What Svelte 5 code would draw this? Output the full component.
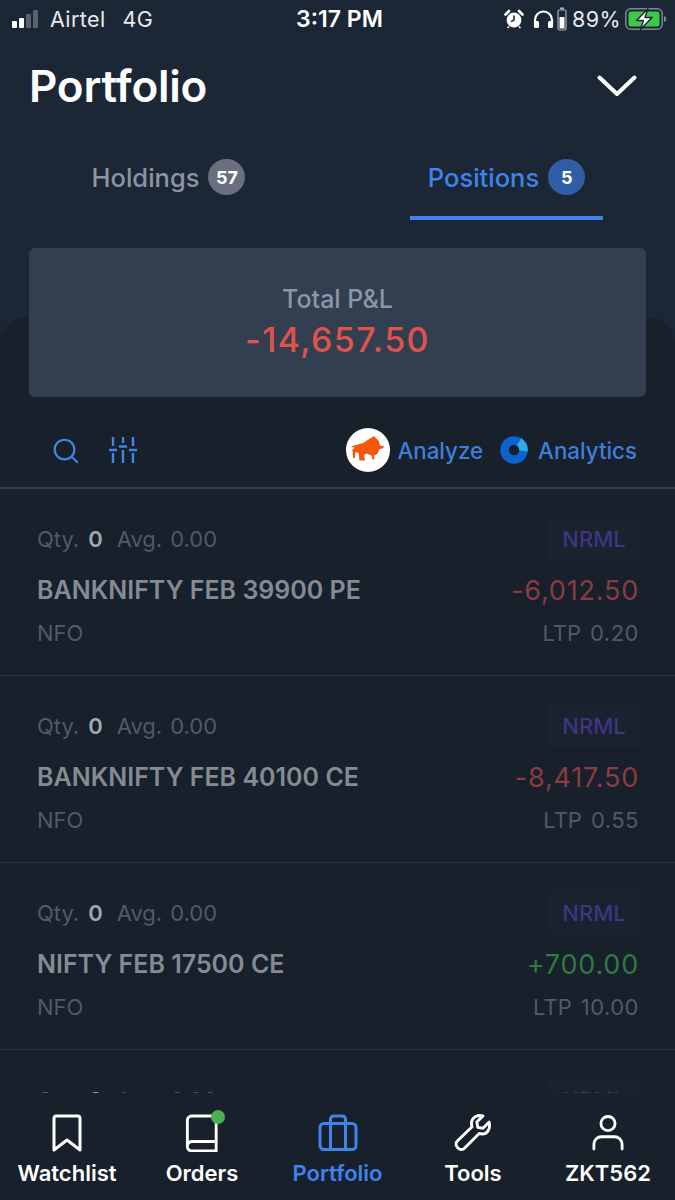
<script>
  const positions = [
    { name: 'BANKNIFTY FEB 39900 PE', pnl: '-6,012.50', ltp: '0.20', tone: 'loss' },
    { name: 'BANKNIFTY FEB 40100 CE', pnl: '-8,417.50', ltp: '0.55', tone: 'loss' },
    { name: 'NIFTY FEB 17500 CE', pnl: '+700.00', ltp: '10.00', tone: 'gain' },
    { clipped: true },
  ];
</script>

<div class="screen">
  <div class="status">
    <div class="status-left">
      <span class="signal"><i class="on s1"></i><i class="on s2"></i><i class="s3"></i><i class="s4"></i></span>
      <span>Airtel</span>
      <span class="net">4G</span>
    </div>
    <div class="clock">3:17 PM</div>
    <div class="status-right">
      <svg class="alarm" width="20" height="20" viewBox="0 0 20 20">
        <circle cx="10" cy="11" r="7.4" fill="#fff" />
        <path d="M10 6.500V11l-3 1.600" fill="none" stroke="#1b2735" stroke-width="1.600" />
        <path d="M1.500 5.500 5 2M18.500 5.500 15 2" stroke="#fff" stroke-width="2.600" stroke-linecap="round" />
        <path d="M5 17.500 3.600 19M15 17.500l1.400 1.500" stroke="#fff" stroke-width="1.600" />
      </svg>
      <svg class="phones" width="21" height="19" viewBox="0 0 21 19">
        <path d="M2 16V10a8.500 8.500 0 0 1 17 0v6" fill="none" stroke="#fff" stroke-width="2.200" />
        <rect x="1" y="11" width="5" height="7" rx="1.500" fill="#fff" />
        <rect x="15" y="11" width="5" height="7" rx="1.500" fill="#fff" />
      </svg>
      <svg class="mini-batt" width="10" height="24" viewBox="0 0 10 24">
        <rect x="3" y="0.500" width="4" height="2" fill="#aab0b7" />
        <rect x="1" y="3" width="8" height="20" rx="1.500" fill="none" stroke="#aab0b7" stroke-width="1.200" />
        <rect x="2.500" y="10" width="5" height="11.500" fill="#fff" />
      </svg>
      <span class="pct">89%</span>
      <svg width="42" height="22" viewBox="0 0 42 22">
        <rect x="0.800" y="0.800" width="36.400" height="20.400" rx="5" fill="none" stroke="#7f868d" stroke-width="1.500" />
        <rect x="3.500" y="3.500" width="31" height="15" rx="2.500" fill="#3cc94a" />
        <path d="M39 8v6c1.500-.4 2.200-1.500 2.200-3S40.500 8.400 39 8Z" fill="#7f868d" />
        <path d="M23 0.800 11.500 12.500h7L15.500 21.500 27 9.500h-7Z" fill="#fff" stroke="#1b2735" stroke-width="1.400" stroke-linejoin="round" />
      </svg>
    </div>
  </div>

  <header class="title-bar">
    <h1>Portfolio</h1>
    <svg width="40" height="24" viewBox="0 0 40 24">
      <path d="M2.500 3.500 20 20 37.500 3.500" fill="none" stroke="#fff" stroke-width="4" stroke-linecap="round" stroke-linejoin="round" />
    </svg>
  </header>

  <nav class="tabs">
    <div class="tab">
      <span>Holdings</span><b class="count grey">57</b>
    </div>
    <div class="tab active">
      <span>Positions</span><b class="count blue">5</b>
    </div>
  </nav>

  <section class="total">
    <div class="total-label">Total P&amp;L</div>
    <div class="total-value">-14,657.50</div>
  </section>

  <main class="panel">
    <div class="tools">
      <svg class="tool-search" width="27" height="27" viewBox="0 0 28 28">
        <circle cx="13" cy="13" r="10.200" fill="none" stroke="#4285e6" stroke-width="2.200" />
        <path d="m20.500 20.500 5.500 5.500" stroke="#4285e6" stroke-width="2.200" stroke-linecap="round" />
      </svg>
      <svg class="tool-filter" width="30" height="28" viewBox="0 0 30 28">
        <path d="M5 1v9M5 17v10M15 1v6M15 14v13M25 1v9M25 17v10M1 14h8M11 10.500h8M21 14h8" fill="none" stroke="#4285e6" stroke-width="2.400" />
      </svg>
      <div class="links">
        <span class="bull">
          <svg width="36" height="30" viewBox="0 0 36 30">
            <path d="M1 11.500 6 10l7-2 11-7 5 5.500 1 4 4.500 1-2 2-3 .5-2 5-3.500 1.500.5 4h-2l-1-4-5-2-2.500 1.500 1 5.500H9.500L8.500 18 5.500 17l-.5 6H3L2.500 14 5 13Z" fill="#f4560c" />
          </svg>
        </span>
        <span class="link-text">Analyze</span>
        <svg class="ring" width="28" height="28" viewBox="0 0 28 28">
          <circle cx="14" cy="14" r="9.500" fill="none" stroke="#0c62d0" stroke-width="8.500" />
          <path d="M19 5.900A9.500 9.500 0 0 1 23.400 15" fill="none" stroke="#2ea8ee" stroke-width="8.500" />
        </svg>
        <span class="link-text">Analytics</span>
      </div>
    </div>

    <div class="list">
      {#each positions as p}
        <article class="row">
          <div class="line">
            <div class="meta">
              <span>Qty.</span><b>0</b><span class="avg">Avg.</span><span class="avg-val">0.00</span>
            </div>
            <span class="product">NRML</span>
          </div>
          {#if !p.clipped}
            <div class="line mid">
              <span class="name">{p.name}</span>
              <span class="pnl {p.tone}">{p.pnl}</span>
            </div>
            <div class="line low">
              <span>NFO</span>
              <span class="ltp">LTP<em>{p.ltp}</em></span>
            </div>
          {/if}
        </article>
      {/each}
    </div>
  </main>

  <footer class="bottom">
    <div class="item">
      <svg width="34" height="38" viewBox="0 0 34 38">
        <path d="M4 4.500A2.500 2.500 0 0 1 6.500 2h21A2.500 2.500 0 0 1 30 4.500V36L17 26 4 36Z" fill="none" stroke="#fff" stroke-width="3" stroke-linejoin="round" />
      </svg>
      <span>Watchlist</span>
    </div>
    <div class="item">
      <span class="book">
        <svg width="34" height="38" viewBox="0 0 36 40">
          <path d="M33 2H7a4.500 4.500 0 0 0-4.500 4.500v28A4.500 4.500 0 0 0 7 39h26ZM2.500 33A5 5 0 0 1 7 29h26" fill="none" stroke="#fff" stroke-width="3" stroke-linejoin="round" />
        </svg>
        <i class="dot"></i>
      </span>
      <span>Orders</span>
    </div>
    <div class="item current">
      <svg width="40" height="38" viewBox="0 0 40 38">
        <rect x="2" y="9.500" width="36" height="26" rx="4" fill="none" stroke="#3f83ec" stroke-width="3" />
        <path d="M12.500 9.500V5a3 3 0 0 1 3-3h9a3 3 0 0 1 3 3v4.500M12.500 9.500v26M27.500 9.500v26" fill="none" stroke="#3f83ec" stroke-width="3" />
      </svg>
      <span>Portfolio</span>
    </div>
    <div class="item">
      <svg width="38" height="38" viewBox="0 0 40 40">
        <path d="M37 8.500 30.500 15l-5.500-1-1-5.500L30.500 2C25 .5 19.500 3 18.500 8.500c-.3 1.800 0 3.500.5 5L3.500 28.500a4.500 4.500 0 0 0 0 6.500l1 1a4.500 4.500 0 0 0 6.500 0L26.500 20.500c1.500.5 3.200.7 5 .5C36 20 38.500 14 37 8.500Z" fill="none" stroke="#fff" stroke-width="3" stroke-linejoin="round" />
      </svg>
      <span>Tools</span>
    </div>
    <div class="item">
      <svg width="32" height="38" viewBox="0 0 34 40">
        <circle cx="17" cy="10" r="7.500" fill="none" stroke="#fff" stroke-width="3" />
        <path d="M2 37v-4.500C2 27 6 24 10 24h14c4 0 8 3 8 8.500V37" fill="none" stroke="#fff" stroke-width="3" stroke-linecap="round" />
      </svg>
      <span>ZKT562</span>
    </div>
  </footer>
</div>

<style>
  :global(body) {
    margin: 0;
    background: #1b2735;
  }

  .screen {
    display: flex;
    flex-direction: column;
    width: 675px;
    height: 1200px;
    overflow: hidden;
    background: #1b2735;
    color: #fff;
    font-family: Inter, 'Liberation Sans', sans-serif;
  }

  .status {
    display: grid;
    grid-template-columns: 1fr auto 1fr;
    align-items: center;
    box-sizing: border-box;
    height: 46px;
    padding: 0 8px 8px 12px;
    font-size: 21.500px;
    color: #e8eaed;
    flex: none;
  }

  .status-left {
    display: flex;
    align-items: center;
    letter-spacing: 0.400px;
  }

  .net {
    margin-left: 17px;
  }

  .signal {
    display: flex;
    align-items: flex-end;
    gap: 2px;
    width: 30px;
    height: 18px;
    margin-right: 8px;
  }

  .signal i {
    width: 5px;
    background: #59626d;
    border-radius: 1px;
  }

  .signal .on {
    background: #fff;
  }

  .s1 { height: 7px; }
  .s2 { height: 10px; }
  .s3 { height: 14px; }
  .s4 { height: 18px; }

  .clock {
    font-weight: 600;
    font-size: 23px;
    color: #fff;
  }

  .status-right {
    display: flex;
    align-items: center;
    justify-content: flex-end;
    gap: 3px;
  }

  .phones {
    margin-left: 6px;
  }

  .pct {
    margin: 0 1px 0 2px;
    letter-spacing: 0.400px;
  }

  .title-bar {
    display: flex;
    align-items: center;
    justify-content: space-between;
    box-sizing: border-box;
    height: 102px;
    padding: 0 38px 22px 29px;
    flex: none;
  }

  h1 {
    margin: 0;
    font-size: 44px;
    font-weight: 600;
    letter-spacing: -0.200px;
    color: #fff;
  }

  .tabs {
    display: flex;
    height: 72px;
    padding: 0 72px;
    justify-content: space-between;
    flex: none;
  }

  .tab {
    display: flex;
    align-items: center;
    justify-content: center;
    gap: 9px;
    width: 193px;
    box-sizing: border-box;
    padding-bottom: 14px;
    font-size: 25.500px;
    font-weight: 500;
    color: #8d93a3;
  }

  .tab.active {
    color: #3f83ec;
    border-bottom: 4px solid #3f83ec;
    padding-bottom: 10px;
  }

  .count {
    display: flex;
    align-items: center;
    justify-content: center;
    width: 37px;
    height: 36px;
    border-radius: 50%;
    font-size: 18px;
    font-weight: 700;
    color: #fff;
  }

  .grey { background: #6a6f80; }
  .blue { background: #2f5da6; }

  .total {
    position: relative;
    z-index: 1;
    display: flex;
    flex-direction: column;
    align-items: center;
    justify-content: center;
    flex: none;
    height: 149px;
    margin: 28px 29px 0;
    border-radius: 6px;
    background: #313f51;
  }

  .total-label {
    font-size: 25px;
    font-weight: 500;
    color: #8d95a6;
    line-height: 28px;
    margin-top: 2px;
  }

  .total-value {
    font-size: 34px;
    font-weight: 500;
    letter-spacing: 1.400px;
    color: #e0524c;
    line-height: 44px;
    margin-top: 5px;
  }

  .panel {
    display: flex;
    flex-direction: column;
    flex: 1;
    min-height: 0;
    margin-top: -80px;
    padding-top: 80px;
    border-radius: 28px 28px 0 0;
    background: #17202b;
    overflow: hidden;
  }

  .tools {
    display: flex;
    align-items: center;
    flex: none;
    box-sizing: border-box;
    height: 92px;
    padding: 16px 38px 0 52px;
    border-bottom: 2px solid #353d47;
  }

  .tool-filter {
    margin-left: 29px;
  }

  .links {
    display: flex;
    align-items: center;
    margin-left: auto;
  }

  .bull {
    display: flex;
    align-items: center;
    justify-content: center;
    width: 44px;
    height: 44px;
    border-radius: 50%;
    background: #fff;
    margin-right: 7px;
  }

  .link-text {
    font-size: 22.300px;
    font-weight: 500;
    color: #3f7fdc;
  }

  .ring {
    margin: 0 10px 0 17px;
  }

  .list {
    flex: 1;
    min-height: 0;
    overflow: hidden;
  }

  .row {
    display: flex;
    flex-direction: column;
    box-sizing: border-box;
    height: 187px;
    padding: 28px 36px 0 37px;
    border-bottom: 1px solid #2b343f;
    font-size: 22px;
    color: #525a66;
  }

  .line {
    display: flex;
    align-items: center;
    justify-content: space-between;
  }

  .meta {
    display: flex;
    align-items: center;
    height: 44px;
  }

  .meta b {
    margin: 0 14px 0 9px;
    color: #a3a8ae;
    font-weight: 600;
  }

  .avg-val {
    margin-left: 8px;
  }

  .product {
    display: flex;
    align-items: center;
    justify-content: center;
    width: 94px;
    height: 44px;
    margin-right: -2px;
    border-radius: 4px;
    background: #1a2230;
    color: #3f3580;
    font-size: 22px;
    font-weight: 500;
  }

  .mid {
    margin-top: 7px;
    height: 44px;
  }

  .name {
    font-size: 25px;
    font-weight: 600;
    color: #858b93;
  }

  .pnl {
    font-size: 27px;
    letter-spacing: 0.800px;
  }

  .loss { color: #893c41; }
  .gain { color: #2f7a41; }

  .low {
    height: 42px;
  }

  .ltp em {
    font-style: normal;
    margin-left: 9px;
    letter-spacing: 0.500px;
  }

  .bottom {
    display: grid;
    grid-template-columns: 134px 136px 135px 136px 134px;
    flex: none;
    height: 107px;
    background: #17202b;
    position: relative;
    z-index: 1;
  }

  .item {
    display: flex;
    flex-direction: column;
    align-items: center;
    justify-content: flex-end;
    height: 93px;
    gap: 8px;
    font-size: 22px;
    font-weight: 600;
    color: #fff;
  }

  .item svg {
    display: block;
  }

  .item.current {
    color: #3f83ec;
  }

  .book {
    position: relative;
    display: block;
  }

  .dot {
    position: absolute;
    top: -4px;
    right: -6px;
    width: 14px;
    height: 14px;
    border-radius: 50%;
    background: #4caf50;
  }
</style>
